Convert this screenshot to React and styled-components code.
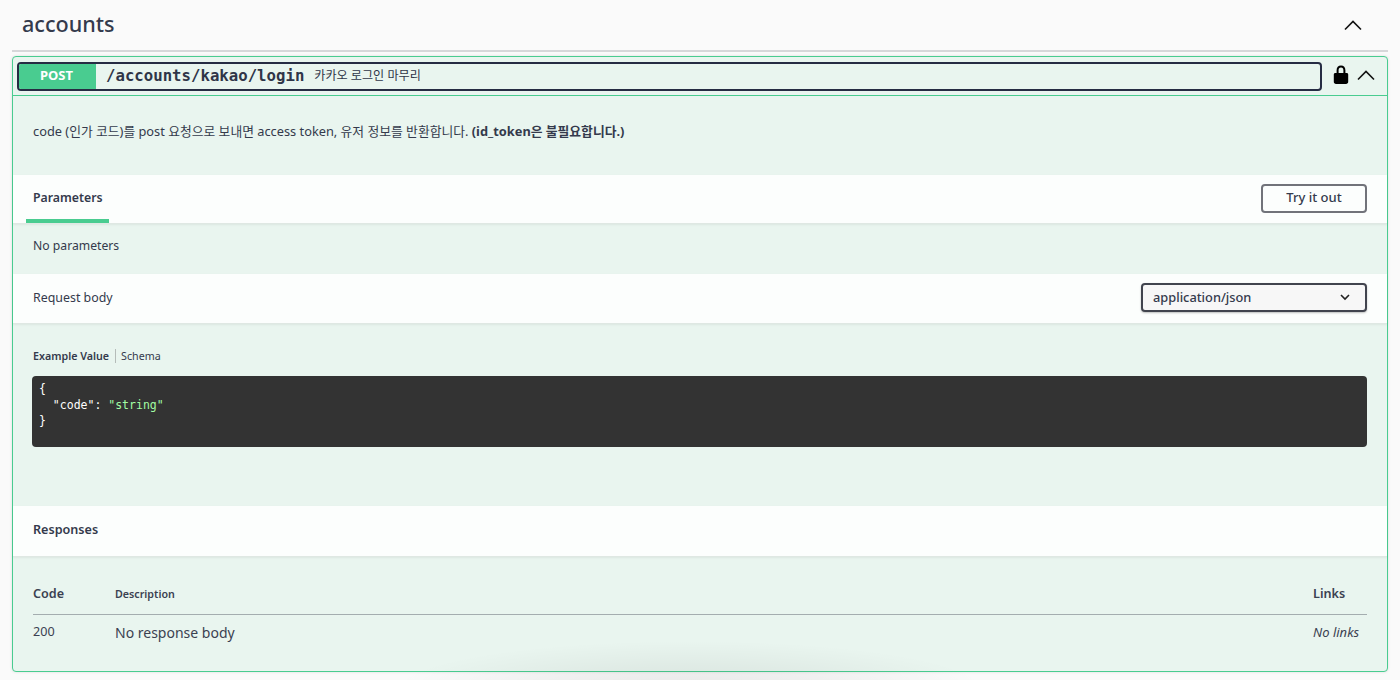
import styled, { createGlobalStyle } from "styled-components"

const GlobalStyle = createGlobalStyle`
  html, body {
    margin: 0;
    padding: 0;
    height: 680px;
    overflow: hidden;
    background: #fafafa;
    font-family: "Noto Sans", "Noto Sans CJK KR", sans-serif;
    color: #3b4151;
  }
`

const Chevron = ({ size = 20, width = 1.6 }) => (
  <svg width={size} height={size} viewBox="0 0 20 20" fill="none">
    <path d="M2 14.5 L10 6.5 L18 14.5" stroke="#111" strokeWidth={width} />
  </svg>
)

const Lock = () => (
  <svg width="16" height="20" viewBox="0 0 16 20">
    <path
      d="M8 .6C5.2.6 3.6 2.6 3.6 5.2V8H2.4C1.4 8 .8 8.7.8 9.6v7.2c0 1.3.9 2.2 2.2 2.2h10c1.3 0 2.2-.9 2.2-2.2V9.6c0-.9-.6-1.6-1.6-1.6h-1.2V5.2C12.4 2.6 10.8.6 8 .6zm0 2c1.6 0 2.4 1.1 2.4 2.7V8H5.6V5.3C5.6 3.7 6.4 2.6 8 2.6z"
      fill="#000"
    />
  </svg>
)

export default function App() {
  return (
    <Page>
      <GlobalStyle />
      <TagHeader>
        <TagName>accounts</TagName>
        <TagToggle><Chevron /></TagToggle>
      </TagHeader>
      <Operation>
        <Summary>
          <SummaryButton>
            <Method>POST</Method>
            <Path>/accounts/kakao/login</Path>
            <PathDesc>카카오 로그인 마무리</PathDesc>
          </SummaryButton>
          <SummaryIcons>
            <Lock />
            <Chevron />
          </SummaryIcons>
        </Summary>

        <Description>
          code (인가 코드)를 post 요청으로 보내면 access token, 유저 정보를 반환합니다. <strong>(id_token은 불필요합니다.)</strong>
        </Description>

        <SectionBar $height={49}>
          <Tab>Parameters</Tab>
          <TryButton>Try it out</TryButton>
        </SectionBar>
        <NoParams>No parameters</NoParams>

        <SectionBar $height={50}>
          <BarLabel>Request body</BarLabel>
          <MediaSelect>
            application/json
            <svg width="12" height="12" viewBox="0 0 12 12" fill="none">
              <path d="M2 4 L6 8 L10 4" stroke="#222" strokeWidth="1.6" />
            </svg>
          </MediaSelect>
        </SectionBar>

        <BodySection>
          <ExampleTabs>
            <ExampleTab $active>Example Value</ExampleTab>
            <ExampleTab>Schema</ExampleTab>
          </ExampleTabs>
          <CodeBlock>
            {"{\n  "}
            <span>"code"</span>: <Str>"string"</Str>
            {"\n}"}
          </CodeBlock>
        </BodySection>

        <SectionBar $height={51}>
          <BarLabel $strong>Responses</BarLabel>
        </SectionBar>

        <ResponseSection>
          <ResponseHead>
            <HeadCode>Code</HeadCode>
            <HeadDesc>Description</HeadDesc>
            <HeadLinks>Links</HeadLinks>
          </ResponseHead>
          <ResponseRow>
            <RowCode>200</RowCode>
            <RowDesc>No response body</RowDesc>
            <RowLinks>No links</RowLinks>
          </ResponseRow>
        </ResponseSection>
      </Operation>
      <BottomShade />
    </Page>
  )
}

const Page = styled.div`
  position: relative;
  width: 1400px;
  height: 680px;
  padding: 0 12px;
  box-sizing: border-box;
  overflow: hidden;
`

const TagHeader = styled.div`
  height: 50px;
  box-sizing: content-box;
  border-bottom: 2px solid #d6d7d9;
  display: flex;
  align-items: center;
  justify-content: space-between;
  padding: 0 25px 0 10px;
`

const TagName = styled.h3`
  margin: -3px 0 0;
  font-size: 21.6px;
  font-weight: 500;
  color: #343a4c;
`

const TagToggle = styled.div`
  display: flex;
  margin-top: -1px;
`

const Operation = styled.div`
  margin-top: 4px;
  height: 616px;
  box-sizing: border-box;
  border: 1px solid #49cc90;
  border-radius: 4px;
  background: #e9f5ef;
  box-shadow: 0 0 3px rgba(0, 0, 0, 0.12);
  display: flex;
  flex-direction: column;
`

const Summary = styled.div`
  height: 39px;
  flex: none;
  box-sizing: border-box;
  border-bottom: 1px solid #49cc90;
  display: flex;
  align-items: center;
  padding: 0 10px 0 4px;
`

const SummaryButton = styled.div`
  width: 1305px;
  height: 29px;
  flex: none;
  box-sizing: border-box;
  border: 2px solid #262c43;
  border-radius: 4px;
  display: flex;
  align-items: center;
  overflow: hidden;
`

const Method = styled.div`
  width: 77px;
  height: 100%;
  flex: none;
  box-sizing: border-box;
  padding-right: 2px;
  background: #49cc90;
  color: #fff;
  font-size: 13px;
  font-weight: 700;
  line-height: 23px;
  display: flex;
  align-items: flex-start;
  justify-content: center;
`

const Path = styled.span`
  margin-left: 10px;
  font-family: "DejaVu Sans Mono", monospace;
  font-size: 15.7px;
  font-weight: 700;
  color: #2f3548;
  margin-top: -1px;
`

const PathDesc = styled.span`
  margin-left: 10px;
  font-size: 12.1px;
  color: #2f3548;
  margin-top: -2px;
`

const SummaryIcons = styled.div`
  margin-left: 11px;
  display: flex;
  align-items: center;
  gap: 7px;
  margin-top: -3px;
`

const Description = styled.div`
  height: 79px;
  flex: none;
  box-sizing: border-box;
  padding: 25px 19px 0 20px;
  font-size: 12.8px;
  line-height: 20px;
  color: #343a4c;

  strong {
    font-weight: 700;
  }
`

const SectionBar = styled.div`
  height: ${(p) => p.$height}px;
  flex: none;
  box-sizing: border-box;
  background: rgba(255, 255, 255, 0.85);
  border-bottom: 1px solid #dfe8e3;
  box-shadow: 0 1px 2px rgba(0, 0, 0, 0.06);
  display: flex;
  align-items: center;
  justify-content: space-between;
  padding: 0 20px 0 19px;
`

const Tab = styled.div`
  align-self: stretch;
  width: 83px;
  margin-left: -6px;
  box-sizing: border-box;
  padding: 13px 0 0 7px;
  border-bottom: 4px solid #49cc90;
  font-size: 12.3px;
  font-weight: 600;
  line-height: 20px;
  color: #343a4c;
`

const TryButton = styled.button`
  width: 106px;
  height: 29px;
  box-sizing: border-box;
  background: transparent;
  border: 2px solid #71737a;
  border-radius: 4px;
  font-family: inherit;
  font-size: 13px;
  font-weight: 500;
  line-height: 23px;
  color: #343a4c;
  padding: 0 0 2px;
  margin-top: -2px;
`

const BarLabel = styled.div`
  font-size: ${(p) => (p.$strong ? 12.6 : 12.4)}px;
  font-weight: ${(p) => (p.$strong ? 600 : 400)};
  color: #343a4c;
  margin-left: 1px;
  margin-top: ${(p) => (p.$strong ? -3 : -2)}px;
`

const NoParams = styled.div`
  height: 50px;
  flex: none;
  box-sizing: border-box;
  padding: 12px 19px 0 20px;
  font-size: 12.2px;
  line-height: 20px;
  color: #343a4c;
`

const MediaSelect = styled.div`
  width: 226px;
  height: 29px;
  box-sizing: border-box;
  background: #f7f7f7;
  border: 2px solid #41444e;
  border-radius: 4px;
  box-shadow: 0 1px 2px 0 rgba(0, 0, 0, 0.25);
  display: flex;
  align-items: center;
  justify-content: space-between;
  padding: 0 14px 1px 10px;
  font-size: 12.8px;
  font-weight: 500;
  color: #343a4c;
  margin-top: -2px;
`

const BodySection = styled.div`
  height: 182px;
  flex: none;
  box-sizing: border-box;
  padding: 24px 20px 0 19px;
`

const ExampleTabs = styled.div`
  display: flex;
  align-items: center;
  height: 16px;
`

const ExampleTab = styled.div`
  font-size: 10.7px;
  line-height: 14px;
  font-weight: ${(p) => (p.$active ? 600 : 400)};
  color: #343a4c;

  &:first-child {
    margin-left: 1px;
  }

  & + & {
    margin-left: 6px;
    padding-left: 5px;
    border-left: 1px solid #b5bcb9;
  }
`

const CodeBlock = styled.pre`
  margin: 12px 0 0;
  height: 71px;
  box-sizing: border-box;
  background: #333;
  border-radius: 4px;
  padding: 5px 7px;
  font-family: "DejaVu Sans Mono", monospace;
  font-size: 11.5px;
  line-height: 16px;
  font-weight: 400;
  color: #fff;
`

const Str = styled.span`
  color: #a2fca2;
`

const ResponseSection = styled.div`
  padding: 20px 20px 0 20px;
`

const ResponseHead = styled.div`
  display: flex;
  align-items: flex-start;
  height: 38px;
  border-bottom: 1px solid rgba(59, 65, 81, 0.4);
  box-sizing: border-box;
  padding-top: 8px;
`

const HeadCode = styled.div`
  width: 82px;
  font-size: 12.6px;
  font-weight: 600;
`

const HeadDesc = styled.div`
  flex: 1;
  font-size: 10.7px;
  font-weight: 600;
  padding-top: 2px;
`

const HeadLinks = styled.div`
  width: 54px;
  font-size: 12.6px;
  font-weight: 600;
`

const ResponseRow = styled.div`
  display: flex;
  align-items: center;
  height: 36px;
`

const RowCode = styled.div`
  width: 82px;
  font-size: 12.6px;
  margin-top: -3px;
`

const RowDesc = styled.div`
  flex: 1;
  font-size: 14px;
  margin-top: -1px;
`

const RowLinks = styled.div`
  width: 54px;
  font-size: 13px;
  font-style: italic;
  margin-top: -3px;
`

const BottomShade = styled.div`
  position: absolute;
  left: 390px;
  top: 640px;
  width: 600px;
  height: 70px;
  background: radial-gradient(ellipse at 50% 70%, rgba(0, 0, 0, 0.07), rgba(0, 0, 0, 0.04) 35%, rgba(0, 0, 0, 0) 70%);
  pointer-events: none;
`
